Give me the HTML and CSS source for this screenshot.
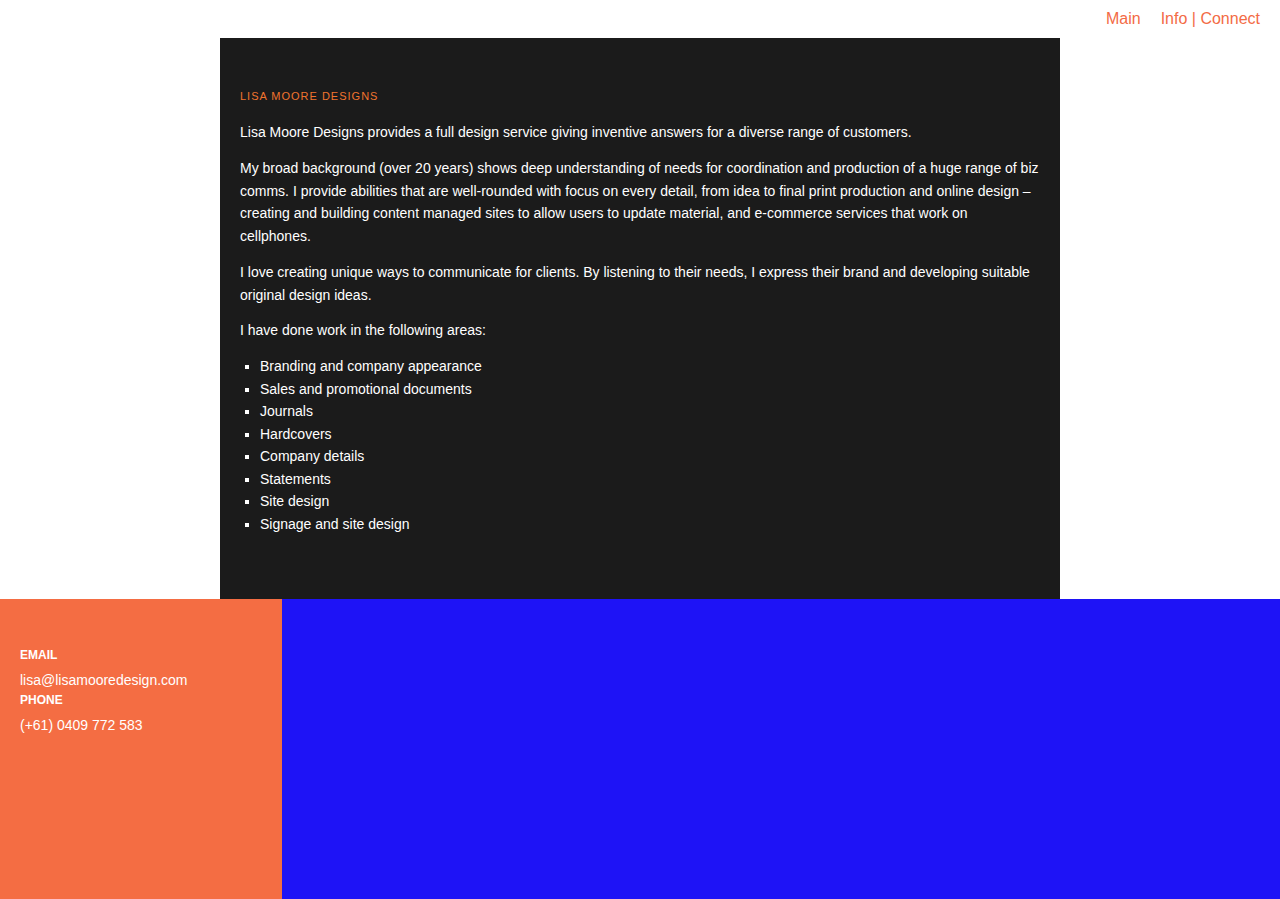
FILE: index.html
```html
<!DOCTYPE html>
<html lang="en">
<head>
<meta charset="utf-8">
<title>Lisa Moore Designs</title>
<link rel="stylesheet" href="styles.css">
</head>
<body>
<header class="topbar">
  <nav class="nav">
    <a href="#" class="nav-link">Main</a>
    <a href="#" class="nav-link">Info | Connect</a>
  </nav>
</header>
<main class="main">
  <section class="panel">
    <h1 class="panel-title">LISA MOORE DESIGNS</h1>
    <p class="text">Lisa Moore Designs provides a full design service giving inventive answers for a diverse range of customers.</p>
    <p class="text">My broad background (over 20 years) shows deep understanding of needs for coordination and production of a huge range of biz comms. I provide abilities that are well-rounded with focus on every detail, from idea to final print production and online design – creating and building content managed sites to allow users to update material, and e-commerce services that work on cellphones.</p>
    <p class="text">I love creating unique ways to communicate for clients. By listening to their needs, I express their brand and developing suitable original design ideas.</p>
    <p class="text">I have done work in the following areas:</p>
    <ul class="list">
      <li>Branding and company appearance</li>
      <li>Sales and promotional documents</li>
      <li>Journals</li>
      <li>Hardcovers</li>
      <li>Company details</li>
      <li>Statements</li>
      <li>Site design</li>
      <li>Signage and site design</li>
    </ul>
  </section>
</main>
<footer class="footer">
  <div class="contact">
    <div class="label">EMAIL</div>
    <div class="value">lisa@lisamooredesign.com</div>
    <div class="label">PHONE</div>
    <div class="value">(+61) 0409 772 583</div>
  </div>
  <div class="blue"></div>
</footer>
</body>
</html>
```

FILE: styles.css
```css
* { box-sizing: border-box; }
html, body {
  margin: 0;
  padding: 0;
  background: #ffffff;
  font-family: "Liberation Sans", Arial, sans-serif;
}
.topbar {
  height: 38px;
  display: flex;
  justify-content: flex-end;
  align-items: flex-start;
  padding: 8px 20px 0 0;
}
.nav {
  display: flex;
  gap: 20px;
}
.nav-link {
  color: #f36b45;
  text-decoration: none;
  font-size: 16px;
  line-height: 22px;
}
.main {
  display: flex;
  justify-content: center;
}
.panel {
  width: 840px;
  height: 561px;
  background: #1b1b1b;
  padding: 48px 20px 50px 20px;
  color: #ffffff;
}
.panel-title {
  margin: 0 0 15px 0;
  font-size: 11px;
  line-height: 20px;
  font-weight: normal;
  letter-spacing: 1px;
  color: #f0742e;
}
.text {
  margin: 0 0 13px 0;
  font-size: 14px;
  line-height: 22.75px;
}
.list {
  margin: 0;
  padding-left: 20px;
  list-style: square;
  font-size: 14px;
  line-height: 22.5px;
}
.footer {
  display: flex;
  height: 300px;
}
.contact {
  width: 282px;
  background: #f46d43;
  padding: 48px 20px 0 20px;
  color: #ffffff;
}
.label {
  font-size: 12px;
  font-weight: bold;
  line-height: 16px;
  margin-bottom: 6px;
}
.value {
  font-size: 14px;
  line-height: 23px;
}
.blue {
  flex: 1;
  background: #1e13f6;
}
```
